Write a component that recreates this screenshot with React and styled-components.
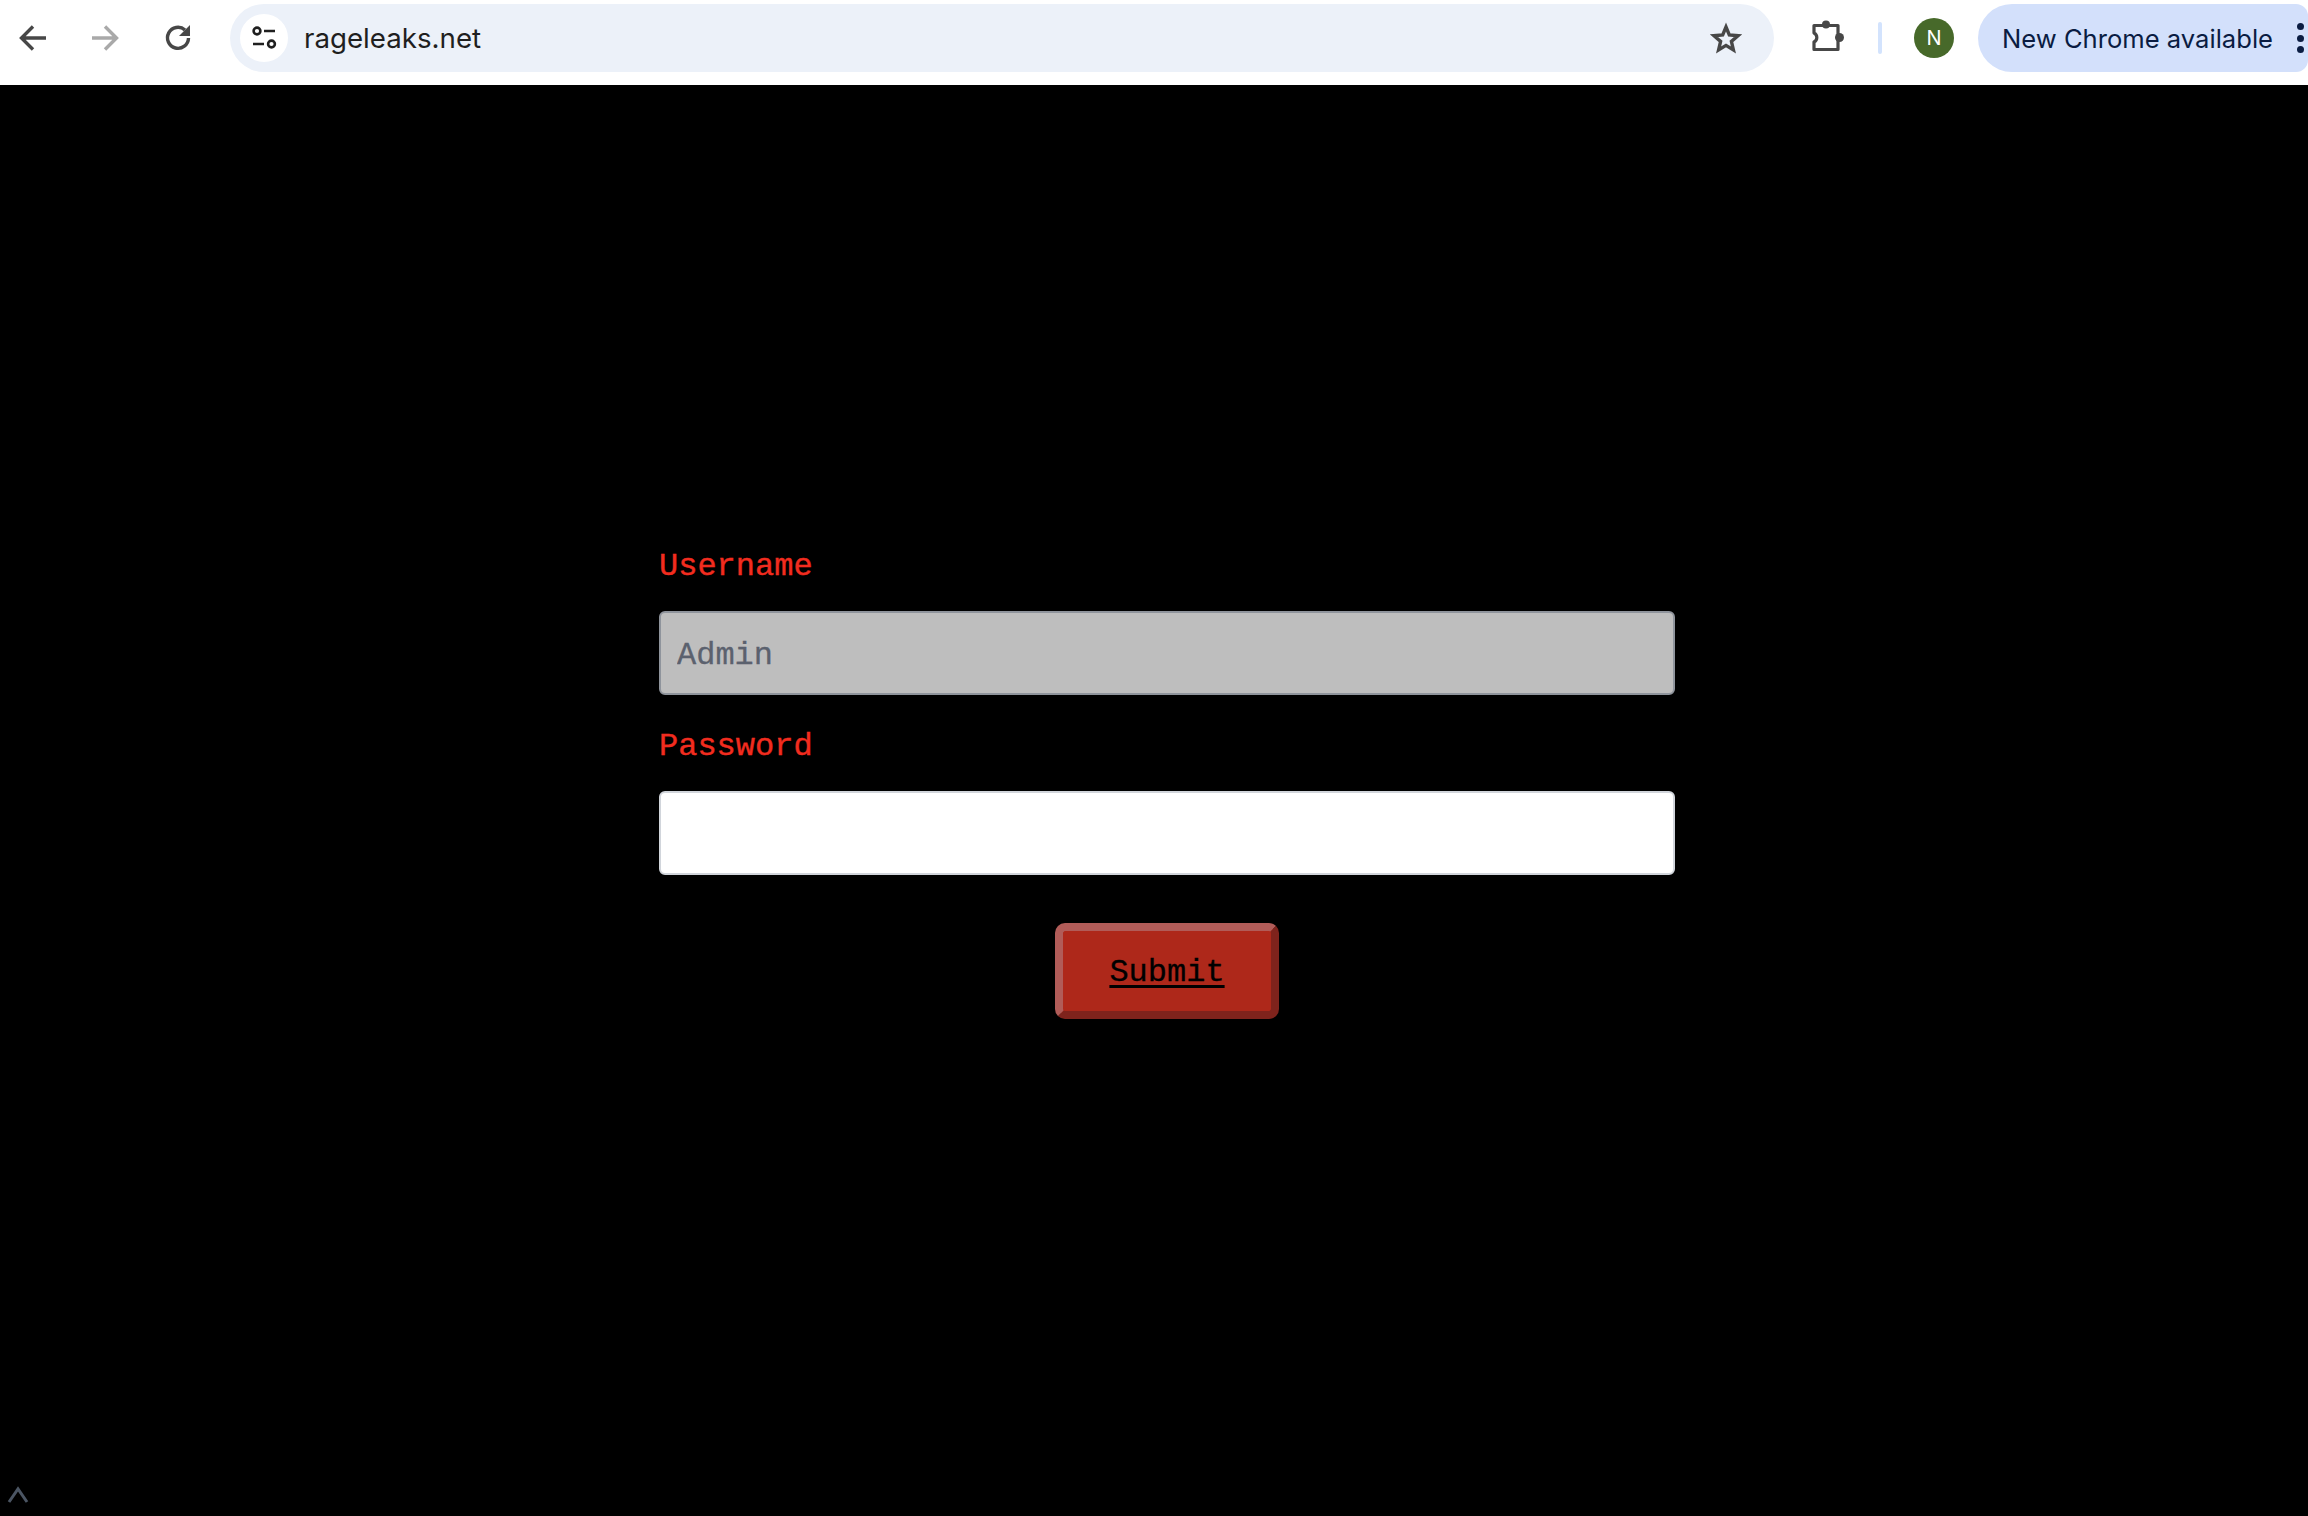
import styled, { createGlobalStyle } from "styled-components";

const GlobalStyle = createGlobalStyle`
  html, body {
    margin: 0;
    padding: 0;
    background: #000;
  }
  * {
    box-sizing: border-box;
  }
`;

const Page = styled.div`
  width: 2308px;
  height: 1516px;
  display: flex;
  flex-direction: column;
  overflow: hidden;
  background: #000;
`;

const Toolbar = styled.div`
  flex: 0 0 85px;
  display: flex;
  align-items: flex-start;
  padding-top: 4px;
  background: #fff;
`;

const NavIcons = styled.div`
  flex: 0 0 230px;
  height: 68px;
  display: flex;
  align-items: center;
  padding-left: 15px;
  gap: 36px;
`;

const NavIcon = styled.svg`
  width: 36px;
  height: 36px;
  fill: none;
  stroke: ${(p) => p.$color || "#474747"};
  stroke-width: 3.4;
`;

const Omnibox = styled.div`
  flex: 0 0 1544px;
  height: 68px;
  display: flex;
  align-items: center;
  padding: 0 32px 0 10px;
  border-radius: 34px;
  background: #ecf1f9;
`;

const SiteBadge = styled.div`
  width: 48px;
  height: 48px;
  border-radius: 50%;
  display: flex;
  align-items: center;
  justify-content: center;
  background: #fff;
`;

const Url = styled.div`
  flex: 1;
  margin-left: 16px;
  font-family: Inter, "Noto Sans", sans-serif;
  font-size: 27.7px;
  color: #1f1f1f;
`;

const Actions = styled.div`
  flex: 1;
  height: 68px;
  display: flex;
  align-items: center;
  min-width: 0;
  padding-left: 37px;
`;

const Separator = styled.div`
  width: 4px;
  height: 32px;
  margin-left: 31px;
  border-radius: 2px;
  background: #d3e3fd;
`;

const Avatar = styled.div`
  width: 40px;
  height: 40px;
  margin-left: 32px;
  border-radius: 50%;
  display: flex;
  align-items: center;
  justify-content: center;
  background: #47692a;
  color: #fff;
  font-family: Inter, "Noto Sans", sans-serif;
  font-size: 20px;
`;

const UpdateChip = styled.div`
  flex: 0 0 330px;
  height: 68px;
  margin-left: 24px;
  padding: 0 4px 0 24px;
  display: flex;
  align-items: center;
  justify-content: space-between;
  border-radius: 34px 12px 12px 34px;
  background: #d3e0fb;
  color: #0a1c42;
  font-family: Inter, "Noto Sans", sans-serif;
  font-size: 25.6px;
  white-space: nowrap;
`;

const Dots = styled.div`
  display: flex;
  flex-direction: column;
  gap: 4.5px;
  span {
    width: 7px;
    height: 7px;
    border-radius: 50%;
    background: #0a1c42;
  }
`;

const Main = styled.main`
  flex: 1;
  position: relative;
  padding: 463px 0 0 659px;
`;

const Form = styled.form`
  width: 1016px;
  display: flex;
  flex-direction: column;
`;

const Label = styled.label`
  height: 63px;
  display: block;
  font-family: "Liberation Mono", monospace;
  font-size: 32px;
  line-height: 38px;
  color: #f22c1f;
  -webkit-text-stroke: 0.4px #f22c1f;
`;

const Input = styled.input`
  width: 100%;
  height: 84px;
  margin-bottom: 33px;
  padding: 4px 16px 0;
  border: 2px solid ${(p) => (p.disabled ? "#8f949c" : "#d1d5db")};
  border-radius: 6px;
  outline: none;
  font-family: "Liberation Mono", monospace;
  font-size: 32px;
  color: #000;
  background: ${(p) => (p.disabled ? "#bebebe" : "#fff")};
  &::placeholder {
    color: #5b616e;
    opacity: 1;
    -webkit-text-stroke: 0.3px #5b616e;
  }
`;

const SubmitButton = styled.button`
  align-self: center;
  width: 224px;
  height: 96px;
  margin-top: 15px;
  padding: 3px 0 0;
  border-width: 8px;
  border-style: solid;
  border-color: #b15c58 #7f231c #7f231c #b15c58;
  border-radius: 10px;
  background: #ae281a;
  color: #000;
  font-family: "Liberation Mono", monospace;
  font-size: 32px;
  text-decoration: underline;
  text-underline-offset: 4px;
  -webkit-text-stroke: 0.3px #000;
`;

const Caret = styled.svg`
  position: absolute;
  left: 7px;
  bottom: 12px;
  width: 22px;
  height: 18px;
  fill: none;
  stroke: #4b5563;
  stroke-width: 3;
`;

const BackIcon = () => (
  <NavIcon viewBox="0 0 36 36">
    <path d="M7 18h24M18 6.5 6.5 18 18 29.5" />
  </NavIcon>
);

const ForwardIcon = () => (
  <NavIcon viewBox="0 0 36 36" $color="#a9a9a9">
    <path d="M5 18h24M18 6.5 29.5 18 18 29.5" />
  </NavIcon>
);

const ReloadIcon = () => (
  <NavIcon viewBox="0 0 36 36">
    <path d="M26 10A10.5 10.5 0 1 0 29.5 18" />
    <path d="M31 5v11H20z" fill="#474747" stroke="none" />
  </NavIcon>
);

const TuneIcon = () => (
  <svg width="26" height="26" viewBox="0 0 26 26" fill="none" stroke="#1f1f1f" strokeWidth="2.6">
    <circle cx="6" cy="6" r="3.4" />
    <path d="M13 6h11M2 19h11" />
    <circle cx="20.5" cy="19" r="3.4" />
  </svg>
);

const StarIcon = () => (
  <svg width="32" height="32" viewBox="0 0 32 32" fill="none" stroke="#474747" strokeWidth="3.4">
    <path d="M16 5l3.3 8 8.7.7-6.6 5.7 2 8.5-7.4-4.5-7.4 4.5 2-8.5L4 13.7l8.7-.7z" />
  </svg>
);

const PuzzleIcon = () => (
  <svg width="36" height="36" viewBox="0 0 36 36" fill="none" stroke="#474747" strokeWidth="3.2">
    <path d="M3 5.5h24v24H3v-7.5a5 5 0 0 0 0-9z" strokeLinejoin="round" />
    <circle cx="15" cy="4.5" r="4" fill="#474747" stroke="none" />
    <circle cx="28.5" cy="17.5" r="4.5" fill="#474747" stroke="none" />
  </svg>
);

const CaretIcon = () => (
  <Caret viewBox="0 0 22 18">
    <path d="M2 16 11 3l9 13" />
  </Caret>
);

export default function App() {
  return (
    <Page>
      <GlobalStyle />
      <Toolbar>
        <NavIcons>
          <BackIcon />
          <ForwardIcon />
          <ReloadIcon />
        </NavIcons>
        <Omnibox>
          <SiteBadge>
            <TuneIcon />
          </SiteBadge>
          <Url>rageleaks.net</Url>
          <StarIcon />
        </Omnibox>
        <Actions>
          <PuzzleIcon />
          <Separator />
          <Avatar>N</Avatar>
          <UpdateChip>
            New Chrome available
            <Dots>
              <span />
              <span />
              <span />
            </Dots>
          </UpdateChip>
        </Actions>
      </Toolbar>
      <Main>
        <Form onSubmit={(e) => e.preventDefault()}>
          <Label htmlFor="username">Username</Label>
          <Input id="username" placeholder="Admin" disabled />
          <Label htmlFor="password">Password</Label>
          <Input id="password" type="password" />
          <SubmitButton type="submit">Submit</SubmitButton>
        </Form>
        <CaretIcon />
      </Main>
    </Page>
  );
}
